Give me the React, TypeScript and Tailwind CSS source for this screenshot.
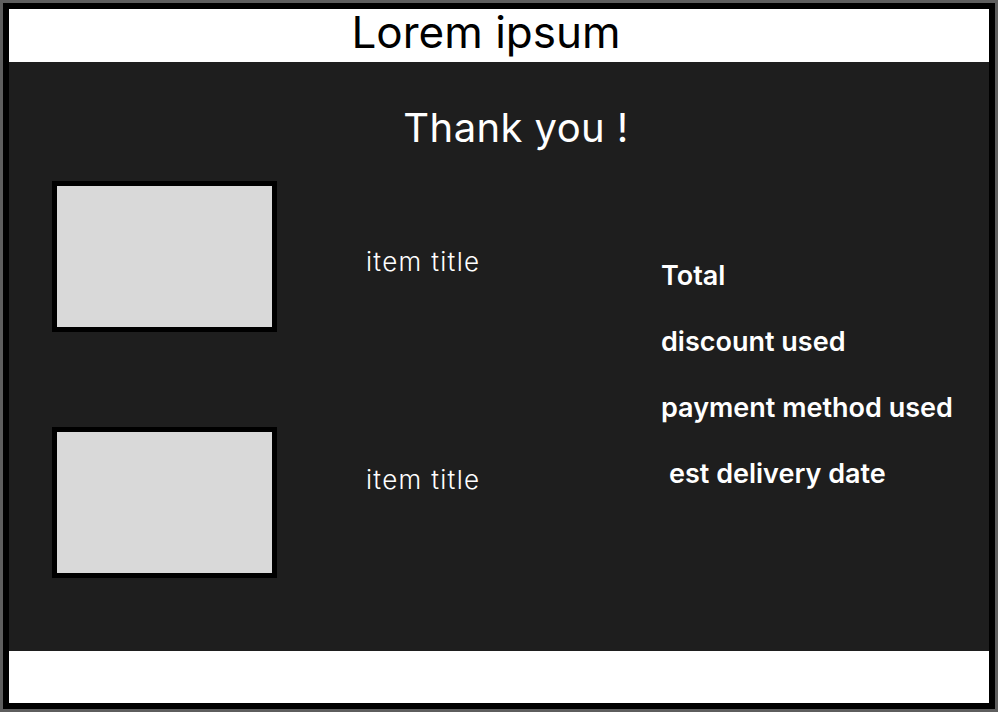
export default function App() {
  const font = { fontFamily: "Inter, 'Noto Sans', sans-serif" }

  return (
    <div className="w-[998px] h-[712px] bg-[#5e5e5e] p-[3px]" style={ font }>
      <div className="h-full flex flex-col border-[6px] border-black">
        <header className="h-[53px] bg-white flex items-center justify-center pr-[26px] pb-[8px]">
          <h1 className="text-[44px] leading-none text-black">Lorem ipsum</h1>
        </header>

        <main className="flex-1 bg-[#1e1e1e] flex flex-col">
          <h2 className="mt-[43px] pl-[34px] text-center text-[40px] leading-[46px] tracking-[0.01em] text-white">Thank you !</h2>

          <div className="mt-[30px] pl-[43px] flex">
            <div className="w-[225px] flex flex-col gap-[95px]">
              <div className="h-[151px] border-[5px] border-black bg-[#d9d9d9]"></div>
              <div className="h-[151px] border-[5px] border-black bg-[#d9d9d9]"></div>
            </div>

            <div className="ml-[89px] w-[295px] flex flex-col text-[26px] leading-[30px] tracking-[0.05em] font-light text-white">
              <p className="mt-[66px]">item title</p>
              <p className="mt-[188px]">item title</p>
            </div>

            <div className="mt-[62px] flex flex-col text-[27px] leading-[66px] font-semibold text-white">
              <p>Total</p>
              <p>discount used</p>
              <p>payment method used</p>
              <p className="pl-[8px]">est delivery date</p>
            </div>
          </div>
        </main>

        <footer className="h-[52px] bg-white"></footer>
      </div>
    </div>
  )
}
